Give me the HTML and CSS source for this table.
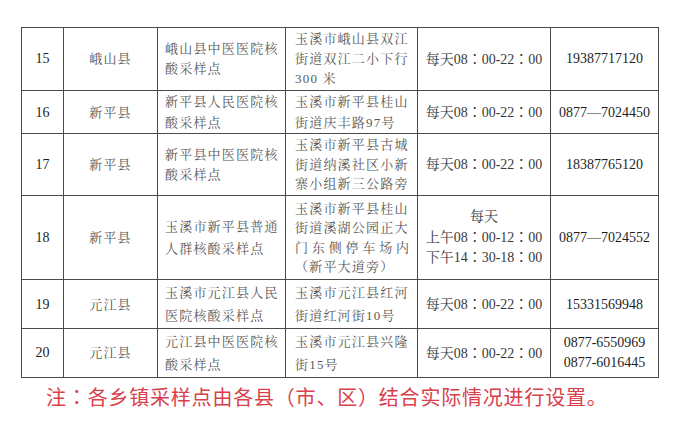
FILE: index.html
```html
<!DOCTYPE html>
<html lang="zh-CN">
<head>
<meta charset="utf-8">
<title>核酸采样点</title>
<link rel="stylesheet" href="styles.css">
</head>
<body>
<div class="page">
  <table class="sheet">
    <colgroup>
      <col class="c-no"><col class="c-county"><col class="c-site"><col class="c-addr"><col class="c-time"><col class="c-tel">
    </colgroup>
    <tbody>
      <tr class="r15">
        <td class="no">15</td>
        <td class="county">峨山县</td>
        <td class="site">峨山县中医医院核<br>酸采样点</td>
        <td class="addr">玉溪市峨山县双江<br>街道双江二小下行<br>300 米</td>
        <td class="time">每天08<span class="cc" lang="zh-TW">：</span>00-22<span class="cc" lang="zh-TW">：</span>00</td>
        <td class="tel">19387717120</td>
      </tr>
      <tr class="r16">
        <td class="no">16</td>
        <td class="county">新平县</td>
        <td class="site">新平县人民医院核<br>酸采样点</td>
        <td class="addr">玉溪市新平县桂山<br>街道庆丰路97号</td>
        <td class="time">每天08<span class="cc" lang="zh-TW">：</span>00-22<span class="cc" lang="zh-TW">：</span>00</td>
        <td class="tel">0877—7024450</td>
      </tr>
      <tr class="r17">
        <td class="no">17</td>
        <td class="county">新平县</td>
        <td class="site">新平县中医医院核<br>酸采样点</td>
        <td class="addr">玉溪市新平县古城<br>街道纳溪社区小新<br>寨小组新三公路旁</td>
        <td class="time">每天08<span class="cc" lang="zh-TW">：</span>00-22<span class="cc" lang="zh-TW">：</span>00</td>
        <td class="tel">18387765120</td>
      </tr>
      <tr class="r18">
        <td class="no">18</td>
        <td class="county">新平县</td>
        <td class="site wide">玉溪市新平县普通<br>人群核酸采样点</td>
        <td class="addr">玉溪市新平县桂山<br>街道溪湖公园正大<br><span class="spread">门东侧停车场内</span>（新平大道旁）</td>
        <td class="time">每天<br>上午08<span class="cc" lang="zh-TW">：</span>00-12<span class="cc" lang="zh-TW">：</span>00<br>下午14<span class="cc" lang="zh-TW">：</span>30-18<span class="cc" lang="zh-TW">：</span>00</td>
        <td class="tel">0877—7024552</td>
      </tr>
      <tr class="r19">
        <td class="no">19</td>
        <td class="county">元江县</td>
        <td class="site">玉溪市元江县人民<br>医院核酸采样点</td>
        <td class="addr">玉溪市元江县红河<br>街道红河街10号</td>
        <td class="time">每天08<span class="cc" lang="zh-TW">：</span>00-22<span class="cc" lang="zh-TW">：</span>00</td>
        <td class="tel">15331569948</td>
      </tr>
      <tr class="r20">
        <td class="no">20</td>
        <td class="county">元江县</td>
        <td class="site">元江县中医医院核<br>酸采样点</td>
        <td class="addr">玉溪市元江县兴隆<br>街15号</td>
        <td class="time">每天08<span class="cc" lang="zh-TW">：</span>00-22<span class="cc" lang="zh-TW">：</span>00</td>
        <td class="tel tel-pair">0877-6550969<br>0877-6016445</td>
      </tr>
    </tbody>
  </table>
  <p class="note">注<span class="cc" lang="zh-TW">：</span>各乡镇采样点由各县（市、区）结合实际情况进行设置。</p>
</div>
</body>
</html>
```
FILE: styles.css
```css
html, body {
  margin: 0;
  padding: 0;
  background: #ffffff;
}

.page {
  padding: 27px 0 0 21px;
  font-family: "Liberation Serif", "Noto Serif CJK SC", "Noto Sans CJK SC", serif;
  color: #2a2a2a;
}

.sheet {
  border-collapse: collapse;
  table-layout: fixed;
  width: 637px;
}

.c-no { width: 42px; }
.c-county { width: 94px; }
.c-site { width: 128px; }
.c-addr { width: 132px; }
.c-time { width: 133px; }
.c-tel { width: 108px; }

.sheet td {
  border: 1px solid #4a4a4a;
  padding: 0;
  vertical-align: middle;
  font-size: 14px;
  line-height: 20px;
  white-space: nowrap;
}

.r15 { height: 63px; }
.r16 { height: 43px; }
.r17 { height: 62px; }
.r18 { height: 84px; }
.r19 { height: 49px; }
.r20 { height: 49px; }

.no {
  text-align: center;
  color: #1e1e1e;
}

.county,
.site,
.addr {
  font-size: 13px !important;
  letter-spacing: 1.2px;
  color: #585858;
}

.county { text-align: center; }
.site { padding-left: 7px !important; }
.addr { padding-left: 9px !important; }

.r15 .addr, .r15 .site { line-height: 20px; }
.r16 td { line-height: 21px; }
.r17 td { line-height: 19.5px; }
.r18 td { line-height: 19.5px; }
.r18 .site.wide { line-height: 22px; }
.r19 td { line-height: 23px; }
.r20 .site, .r20 .addr { line-height: 23.5px; }

.spread {
  display: block;
  width: 114px;
  text-align: justify;
  text-align-last: justify;
  letter-spacing: 0;
}

.time {
  text-align: center;
  color: #3a3a3a;
}

.tel {
  text-align: center;
  color: #1e1e1e;
}

.tel-pair {
  line-height: 20px !important;
}

.note {
  margin: 9px 0 0 25px;
  font-size: 20px;
  line-height: 20px;
  letter-spacing: 0.8px;
  color: #d8404c;
  font-family: "Liberation Serif", "Noto Sans CJK SC", serif;
}

.cc {
  font-family: "Noto Sans CJK TC", "Noto Sans CJK SC", serif;
}
```
